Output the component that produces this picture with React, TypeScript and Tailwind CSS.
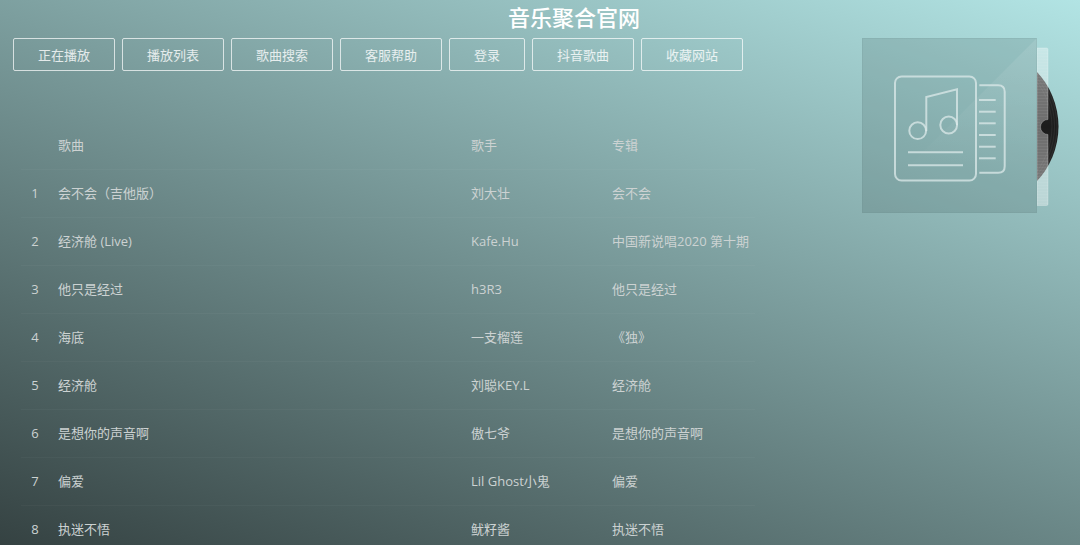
const tabs: string[] = ["正在播放", "播放列表", "歌曲搜索", "客服帮助", "登录", "抖音歌曲", "收藏网站"];

type Song = { name: string; artist: string; album: string };

const songs: Song[] = [
  { name: "会不会（吉他版）", artist: "刘大壮", album: "会不会" },
  { name: "经济舱 (Live)", artist: "Kafe.Hu", album: "中国新说唱2020 第十期" },
  { name: "他只是经过", artist: "h3R3", album: "他只是经过" },
  { name: "海底", artist: "一支榴莲", album: "《独》" },
  { name: "经济舱", artist: "刘聪KEY.L", album: "经济舱" },
  { name: "是想你的声音啊", artist: "傲七爷", album: "是想你的声音啊" },
  { name: "偏爱", artist: "Lil Ghost小鬼", album: "偏爱" },
  { name: "执迷不悟", artist: "鱿籽酱", album: "执迷不悟" },
];

function AlbumCover() {
  const dashes = [62, 73.7, 85.3, 97, 108.7, 120.3];
  const ridges = Array.from({ length: 52 }, (_, i) => 12.5 + i * 3);
  return (
    <svg className="block h-[176px] w-[198px]" viewBox="0 0 198 176" role="img" aria-label="专辑封面">
      <defs>
        <clipPath id="outside">
          <rect x="175" y="0" width="23" height="176" />
        </clipPath>
        <linearGradient id="disc" x1="0" y1="0" x2="0" y2="1">
          <stop offset="0" stopColor="#333" />
          <stop offset="0.5" stopColor="#1c1c1c" />
          <stop offset="1" stopColor="#303030" />
        </linearGradient>
        <linearGradient id="sheen" x1="0" y1="0" x2="0" y2="1">
          <stop offset="0" stopColor="#fff" stopOpacity="0.1" />
          <stop offset="0.75" stopColor="#fff" stopOpacity="0" />
        </linearGradient>
      </defs>
      <g clipPath="url(#outside)">
        <circle cx="116.5" cy="88.5" r="80" fill="url(#disc)" />
        <g fill="none" stroke="#3c3c3c" strokeWidth="0.5">
          <circle cx="116.5" cy="88.5" r="78.5" />
          <circle cx="116.5" cy="88.5" r="76" />
          <circle cx="116.5" cy="88.5" r="73.5" />
        </g>
        <path
          d="M175 10H184.5Q186 10 186 11.5V81.5A7.5 7.5 0 0 0 186 96.5V166Q186 167.5 184.5 167.5H175Z"
          fill="#fff"
          fillOpacity="0.36"
          stroke="#fff"
          strokeOpacity="0.35"
          strokeWidth="0.7"
        />
        <g stroke="#fff" strokeOpacity="0.06">
          {ridges.map((y) => (
            <path key={y} d={`M175 ${y}H${y > 80 && y < 98 ? 178 : 186}`} />
          ))}
        </g>
      </g>
      <rect width="175" height="175" fill="#2f4848" fillOpacity="0.17" />
      <path d="M175 0V175H0Z" fill="url(#sheen)" />
      <rect x="0.5" y="0.5" width="174" height="174" fill="none" stroke="#5f8080" strokeOpacity="0.12" />
      <g fill="none" stroke="#dceaea" strokeOpacity="0.75" strokeWidth="2">
        <rect x="33" y="38.5" width="81" height="104" rx="6.5" />
        <path d="M117.3 47.3H136.2Q142.7 47.3 142.7 53.8V128.2Q142.7 134.7 136.2 134.7H117.3" />
        <circle cx="55.7" cy="92.7" r="8.4" />
        <circle cx="86.7" cy="87" r="8.4" />
        <path d="M64.3 93V59L95 51.3V87M46 114.3H101M46 127.3H101" />
        {dashes.map((y) => (
          <path key={y} d={`M117 ${y}H133.7`} />
        ))}
      </g>
    </svg>
  );
}

export default function App() {
  return (
    <div className="h-screen overflow-hidden bg-linear-[20deg,#354242,#b2e4e4] font-['Open_Sans','Noto_Sans_CJK_SC',sans-serif] text-[13px] leading-5 text-[#ccd2d2]">
      <h1 className="pt-[3px] pb-[7px] pl-[68px] text-center text-[22px] leading-7 font-medium text-white">
        音乐聚合官网
      </h1>
      <div className="flex items-start justify-between pr-5 pl-[13px]">
        <main className="min-w-0 flex-1">
          <nav className="flex gap-[7px]">
            {tabs.map((tab) => (
              <button
                key={tab}
                type="button"
                className="h-[33px] cursor-pointer rounded-xs border border-white/70 px-6 whitespace-nowrap text-white/80 hover:text-white"
              >
                {tab}
              </button>
            ))}
          </nav>
          <div className="mt-[50px] mr-[107px] ml-2">
            <table className="w-full table-fixed border-collapse text-left">
              <thead>
                <tr className="h-12 border-b border-white/3">
                  <th className="w-[37px]" aria-label="序号" />
                  <th className="font-normal">歌曲</th>
                  <th className="w-[141px] font-normal">歌手</th>
                  <th className="w-[143px] font-normal">专辑</th>
                </tr>
              </thead>
              <tbody>
                {songs.map((song, i) => (
                  <tr key={song.name} className="h-12 border-b border-white/3">
                    <td className="pr-[9px] text-center">{i + 1}</td>
                    <td>{song.name}</td>
                    <td className="whitespace-nowrap">{song.artist}</td>
                    <td className="whitespace-nowrap">{song.album}</td>
                  </tr>
                ))}
              </tbody>
            </table>
          </div>
        </main>
        <aside className="shrink-0">
          <AlbumCover />
        </aside>
      </div>
    </div>
  );
}
